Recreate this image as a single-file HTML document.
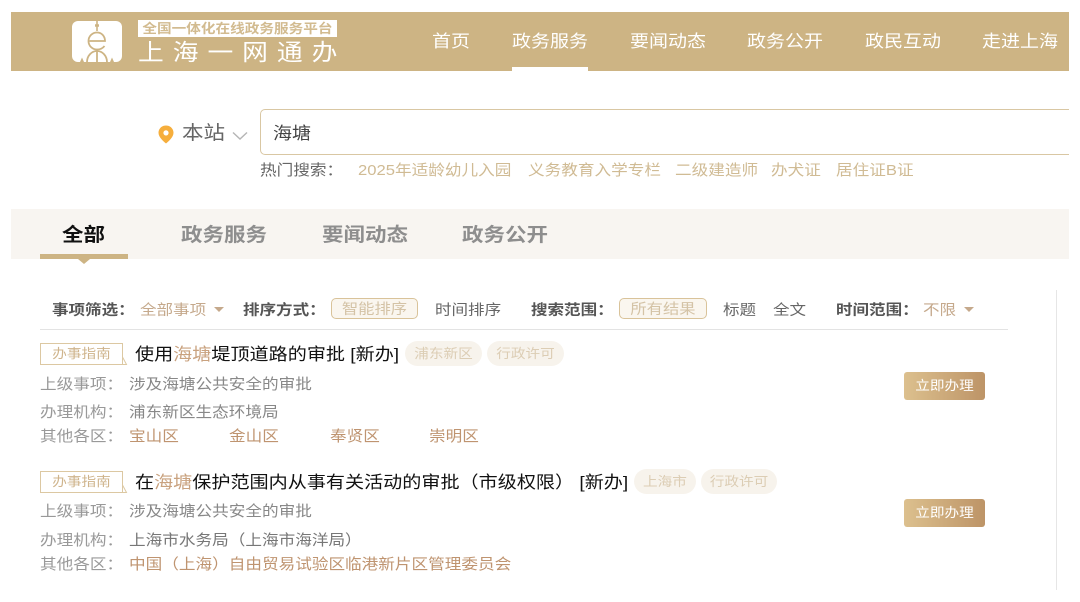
<!DOCTYPE html>
<html lang="zh"><head><meta charset="utf-8"><style>
html,body{margin:0;padding:0;background:#fff;width:1080px;height:602px;overflow:hidden}
body{position:relative;font-family:"Liberation Sans","Noto Sans CJK SC",sans-serif;filter:blur(.35px)}
.a{position:absolute;white-space:nowrap;line-height:20px}
.x{transform-origin:0 50%}
.n{top:31px;font-size:17px;color:#fff;transform:scaleX(1.118);transform-origin:0 50%}
.t{top:225px;font-size:19px;font-weight:700;color:#8e8e8e;line-height:22px;transform:scaleX(1.132);transform-origin:0 50%}
.h{top:160px;font-size:15px;color:#d0bb94;transform:scaleX(1.108);transform-origin:0 50%}
.f{top:301px;font-size:14.5px;color:#666;transform:scaleX(1.14);transform-origin:0 50%}
.fb{font-weight:700;color:#555;font-size:14.500px;top:301px;transform:scaleX(1.14);transform-origin:0 50%}
.g{color:#c5a98c}
.l{font-size:15px;color:#999;transform:scaleX(1.108);transform-origin:0 50%}
.v{font-size:15px;color:#888;transform:scaleX(1.108);transform-origin:0 50%}
.o{font-size:15px;color:#bf9470;transform:scaleX(1.108);transform-origin:0 50%}
.pill{position:absolute;box-sizing:border-box;height:21px;border:1px solid #d9c39a;border-radius:5px;background:#faf6ef;top:298px}
.pill span,.tag span,.chip span,.btn span{display:block;transform:scaleX(1.125);white-space:nowrap}
.pill span{color:#d4c3a6;font-size:14.500px;line-height:23px;height:19px;text-align:center}
.tag{position:absolute;box-sizing:border-box;left:40px;width:83px;height:22px;border:1px solid #dcc8a2;border-right:1px solid #dcc8a2}
.tag span{color:#cfb48c;font-size:13px;line-height:20px;text-align:center}
.tail{position:absolute;left:122px}
.ti{font-size:17px;color:#111;line-height:24px;transform:scaleX(1.123);transform-origin:0 50%}
.ti b{font-weight:400;color:#c9a27f}
.chip{position:absolute;box-sizing:border-box;height:25px;border-radius:13px;background:#f7f3ec}
.chip span{color:#dccdb4;font-size:13px;line-height:25px;text-align:center}
.btn{position:absolute;left:904px;width:81px;height:28px;border-radius:3px;background:linear-gradient(90deg,#dcc08e,#bd9467)}
.btn span{color:#fff;font-size:13px;line-height:28px;text-align:center}
.tri{position:absolute;width:0;height:0;border-left:5px solid transparent;border-right:5px solid transparent;border-top:5px solid #c5a98c;top:307px}
</style></head><body>
<div class="a" style="left:11px;top:12px;width:1058px;height:59px;background:#cdb484"></div>
<div class="a" style="left:72px;top:21px;width:50px;height:41px;background:#fff;border-radius:6px"></div>
<svg class="a" style="left:72px;top:21px" width="50" height="41" viewBox="0 0 50 41" fill="none" stroke="#cdb484" stroke-width="1.8">
<path d="M25 0V10" stroke-width="1.600"/><path d="M23 4.500H27" stroke-width="2.500"/>
<path d="M17.500 20H33C33 15 29.500 11.500 25 11.500C20.500 11.500 16.500 15 16.500 20C16.500 25 20.500 28.500 25 28.500C28 28.500 31 27 32.500 25"/>
<path d="M25 28.500V41M15 41C15 35 19.500 30 25 30C30.500 30 35 35 35 41"/>
<path d="M8 41L10 36.500L12 41ZM42 41L40 36.500L38 41Z" fill="#cdb484" stroke="none"/>
</svg>
<div class="a" style="left:138px;top:20px;width:199px;height:17px;background:#fff"></div>
<div class="a" style="left:138px;top:20px;width:199px;height:17px;line-height:17px;text-align:center;font-size:13px;font-weight:700;color:#d2bb90;transform:scaleX(1.125)">全国一体化在线政务服务平台</div>
<div class="a" style="left:138px;top:38px;font-size:23px;line-height:28px;letter-spacing:8px;color:#fff;transform:scaleX(1.12);transform-origin:0 50%">上海一网通办</div>
<div class="a n" style="left:432px;top:32px">首页</div>
<div class="a n" style="left:512px;top:32px">政务服务</div>
<div class="a" style="left:512px;top:67px;width:76px;height:4px;background:#fff"></div>
<div class="a n" style="left:630px;top:32px">要闻动态</div>
<div class="a n" style="left:747px;top:32px">政务公开</div>
<div class="a n" style="left:865px;top:32px">政民互动</div>
<div class="a n" style="left:982px;top:32px">走进上海</div>

<svg class="a" style="left:158px;top:125px" width="16" height="19" viewBox="0 0 16 19"><path fill-rule="evenodd" fill="#f6ae3c" d="M8 0.500C3.700 0.500 0.500 3.700 0.500 7.800C0.500 12 5 16 8 18.500C11 16 15.500 12 15.500 7.800C15.500 3.700 12.300 0.500 8 0.500ZM8 5.300A2.600 2.600 0 1 1 8 10.500A2.600 2.600 0 1 1 8 5.300Z"/></svg>
<div class="a x" style="left:182px;top:124px;font-size:19px;color:#666;transform:scaleX(1.132)">本站</div>
<svg class="a" style="left:232px;top:131px" width="16" height="10" fill="none" stroke="#b5b5b5" stroke-width="1.4"><path d="M1 1.500L8 8L15 1.500"/></svg>
<div class="a" style="left:260px;top:109px;width:809px;height:46px;overflow:hidden"><div style="width:830px;height:46px;box-sizing:border-box;border:1px solid #d9c7a3;border-radius:5px"></div></div>
<div class="a x" style="left:273px;top:124px;font-size:17px;color:#444;transform:scaleX(1.118)">海塘</div>
<div class="a h" style="left:260px;top:161px;color:#666">热门搜索：</div>
<div class="a h" style="left:358px;top:161px">2025年适龄幼儿入园</div>
<div class="a h" style="left:528px;top:161px">义务教育入学专栏</div>
<div class="a h" style="left:675px;top:161px">二级建造师</div>
<div class="a h" style="left:771px;top:161px">办犬证</div>
<div class="a h" style="left:836px;top:161px">居住证B证</div>

<div class="a" style="left:11px;top:209px;width:1058px;height:50px;background:#f8f5f1"></div>
<div class="a t" style="left:62px;color:#111">全部</div>
<div class="a t" style="left:181px">政务服务</div>
<div class="a t" style="left:322px">要闻动态</div>
<div class="a t" style="left:462px">政务公开</div>
<div class="a" style="left:40px;top:254px;width:88px;height:5px;background:#cdb484"></div>
<div class="a" style="left:78px;top:259px;width:0;height:0;border-left:6px solid transparent;border-right:6px solid transparent;border-top:5px solid #cdb484"></div>

<div class="a" style="left:1056px;top:290px;width:1px;height:300px;background:#e6e6e6"></div>
<div class="a fb" style="left:52px">事项筛选：</div>
<div class="a f g" style="left:140px">全部事项</div>
<div class="tri" style="left:214px"></div>
<div class="a fb" style="left:243px">排序方式：</div>
<div class="pill" style="left:331px;width:87px"><span>智能排序</span></div>
<div class="a f" style="left:435px">时间排序</div>
<div class="a fb" style="left:531px">搜索范围：</div>
<div class="pill" style="left:619px;width:88px"><span>所有结果</span></div>
<div class="a f" style="left:723px">标题</div>
<div class="a f" style="left:773px">全文</div>
<div class="a fb" style="left:836px">时间范围：</div>
<div class="a f g" style="left:923px">不限</div>
<div class="tri" style="left:964px"></div>
<div class="a" style="left:40px;top:329px;width:968px;height:1px;background:#e3e3e3"></div>

<div class="tag" style="top:343px"><span>办事指南</span></div>
<svg class="tail" style="top:343px" width="6" height="22" fill="none" stroke="#dcc8a2"><path d="M.5 14L4.500 21.500H0"/></svg>
<div class="a ti" style="left:135px;top:343px">使用<b>海塘</b>堤顶道路的审批 [新办]</div>
<div class="chip" style="left:405px;top:341px;width:77px"><span>浦东新区</span></div>
<div class="chip" style="left:487px;top:341px;width:77px"><span>行政许可</span></div>
<div class="a l" style="left:40px;top:375px">上级事项：</div><div class="a v" style="left:129px;top:375px">涉及海塘公共安全的审批</div>
<div class="a l" style="left:40px;top:403px">办理机构：</div><div class="a v" style="left:129px;top:403px">浦东新区生态环境局</div>
<div class="a l" style="left:40px;top:427px">其他各区：</div>
<div class="a o" style="left:129px;top:427px">宝山区</div>
<div class="a o" style="left:229px;top:427px">金山区</div>
<div class="a o" style="left:330px;top:427px">奉贤区</div>
<div class="a o" style="left:429px;top:427px">崇明区</div>
<div class="btn" style="top:372px"><span>立即办理</span></div>

<div class="tag" style="top:471px"><span>办事指南</span></div>
<svg class="tail" style="top:471px" width="6" height="22" fill="none" stroke="#dcc8a2"><path d="M.5 14L4.500 21.500H0"/></svg>
<div class="a ti" style="left:135px;top:471px">在<b>海塘</b>保护范围内从事有关活动的审批（市级权限） [新办]</div>
<div class="chip" style="left:634px;top:469px;width:62px"><span>上海市</span></div>
<div class="chip" style="left:701px;top:469px;width:76px"><span>行政许可</span></div>
<div class="a l" style="left:40px;top:502px">上级事项：</div><div class="a v" style="left:129px;top:502px">涉及海塘公共安全的审批</div>
<div class="a l" style="left:40px;top:531px">办理机构：</div><div class="a v" style="left:129px;top:531px;color:#777">上海市水务局（上海市海洋局）</div>
<div class="a l" style="left:40px;top:555px">其他各区：</div>
<div class="a o" style="left:129px;top:555px">中国（上海）自由贸易试验区临港新片区管理委员会</div>
<div class="btn" style="top:499px"><span>立即办理</span></div>
</body></html>
